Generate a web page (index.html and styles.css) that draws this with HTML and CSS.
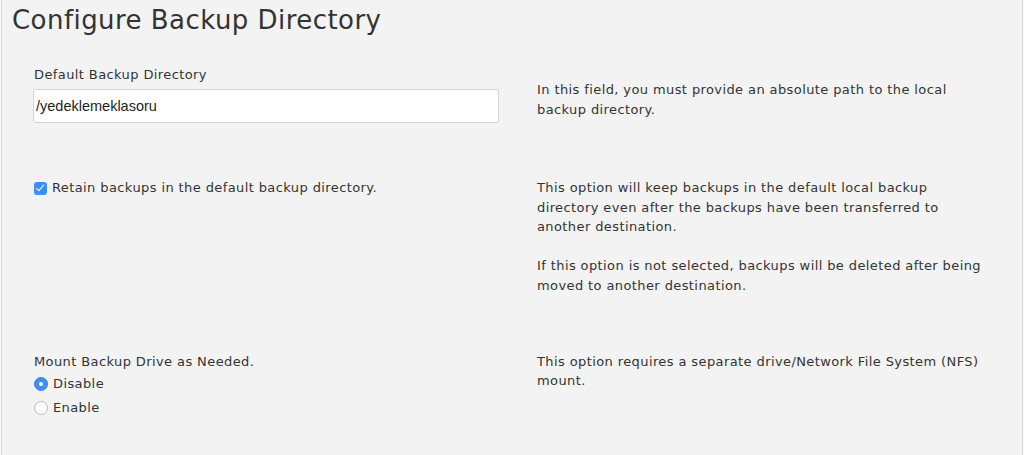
FILE: index.html
```html
<!DOCTYPE html>
<html>
<head>
<meta charset="utf-8">
<link rel="stylesheet" href="styles.css">
</head>
<body>
<div class="page">
  <h1 class="title">Configure Backup Directory</h1>

  <div class="row row-dir">
    <div class="col-left">
      <label class="field-label" for="dir">Default Backup Directory</label>
      <input class="text-input" id="dir" type="text" value="/yedeklemeklasoru">
    </div>
    <div class="col-right help-first">
      <p>In this field, you must provide an absolute path to the local backup directory.</p>
    </div>
  </div>

  <div class="row row-retain">
    <div class="col-left">
      <label class="check-line">
        <input class="check" type="checkbox" checked>
        <span>Retain backups in the default backup directory.</span>
      </label>
    </div>
    <div class="col-right">
      <p>This option will keep backups in the default local backup directory even after the backups have been transferred to another destination.</p>
      <p class="gap">If this option is not selected, backups will be deleted after being moved to another destination.</p>
    </div>
  </div>

  <div class="row row-mount">
    <div class="col-left">
      <div class="field-label">Mount Backup Drive as Needed.</div>
      <label class="radio-line">
        <input class="radio" type="radio" name="mount" checked>
        <span>Disable</span>
      </label>
      <label class="radio-line">
        <input class="radio" type="radio" name="mount">
        <span>Enable</span>
      </label>
    </div>
    <div class="col-right">
      <p>This option requires a separate drive/Network File System (NFS) mount.</p>
    </div>
  </div>
</div>
</body>
</html>
```

FILE: styles.css
```css
html, body {
  margin: 0;
  padding: 0;
  background: #fbfbfb;
}

.page {
  margin: 0 1px;
  height: 455px;
  box-sizing: border-box;
  background: #f3f3f3;
  border-left: 1px solid #d9d9d9;
  border-right: 1px solid #d9d9d9;
  font-family: "DejaVu Sans", Verdana, sans-serif;
  color: #333;
  font-size: 13px;
  letter-spacing: 0.4px;
  overflow: hidden;
}

.title {
  margin: 0;
  padding: 4px 0 0 10px;
  font-size: 26px;
  font-weight: normal;
  line-height: 32px;
  letter-spacing: 0.45px;
  color: #333;
}

.row {
  display: grid;
  grid-template-columns: 466px 445px;
  column-gap: 38px;
  padding-left: 31px;
}

.row-dir { margin-top: 29px; }
.row-retain { margin-top: 55px; }
.row-mount { margin-top: 56px; }

.col-right p {
  margin: 0;
  line-height: 19.6px;
}
.col-right p.gap { margin-top: 19.6px; }

.help-first { padding-top: 15px; }

.field-label {
  display: block;
  line-height: 20px;
  padding-left: 1px;
}

.text-input {
  display: block;
  margin-top: 4px;
  width: 466px;
  height: 34px;
  box-sizing: border-box;
  border: 1px solid #d4d4d4;
  border-radius: 2px;
  background: #fff;
  padding: 0 0 0 2px;
  font-family: "Liberation Sans", Arial, sans-serif;
  font-size: 14.5px;
  letter-spacing: 0;
  color: #1e1e1e;
  outline: none;
}

.check-line, .radio-line {
  display: flex;
  align-items: center;
  line-height: 20px;
  gap: 5px;
  padding-left: 1px;
}

.radio-line { margin-top: 4px; }
.field-label + .radio-line { margin-top: 2px; }

.check {
  appearance: none;
  -webkit-appearance: none;
  margin: 0;
  width: 13px;
  height: 13px;
  border-radius: 3px;
  background: #3d8ff6;
  position: relative;
  flex: none;
}
.check:checked::after {
  content: "";
  position: absolute;
  left: 4px;
  top: 1.5px;
  width: 3px;
  height: 7px;
  border: solid #fff;
  border-width: 0 1.6px 1.6px 0;
  transform: rotate(40deg);
}

.radio {
  appearance: none;
  -webkit-appearance: none;
  margin: 0;
  width: 14px;
  height: 14px;
  border-radius: 50%;
  box-sizing: border-box;
  border: 1px solid #bdbdbd;
  background: #fff;
  position: relative;
  flex: none;
}
.radio:checked {
  background: #3d8ff6;
  border-color: #3a86e8;
}
.radio:checked::after {
  content: "";
  position: absolute;
  left: 4px;
  top: 4px;
  width: 4px;
  height: 4px;
  border-radius: 50%;
  background: #fff;
}
```
